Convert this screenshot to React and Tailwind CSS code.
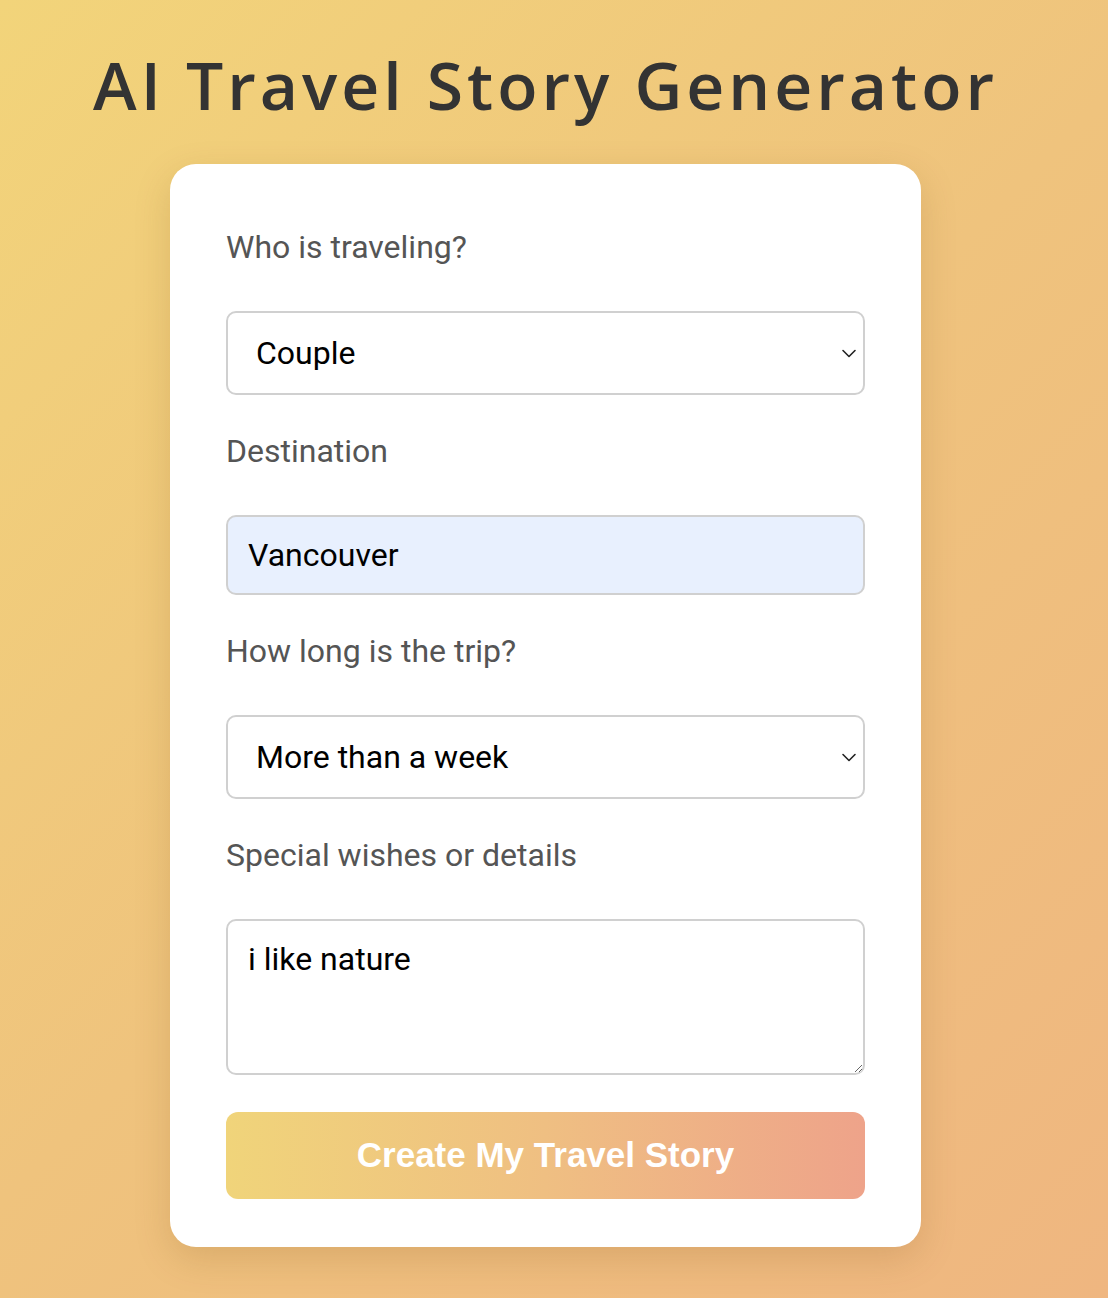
import { useState } from 'react';

function Chevron() {
  return (
    <svg
      className="pointer-events-none absolute right-[8px] top-1/2 -translate-y-1/2"
      width="16"
      height="10"
      viewBox="0 0 16 10"
      fill="none"
    >
      <path d="M2 2.5l6 6 6-6" stroke="#222" strokeWidth="1.6" strokeLinecap="round" strokeLinejoin="round" />
    </svg>
  );
}

function Label({ children, htmlFor }) {
  return (
    <label
      htmlFor={htmlFor}
      className="block h-[36px] leading-[36px] text-[32px] text-[#555] font-['Roboto',sans-serif] mb-[46px]"
    >
      {children}
    </label>
  );
}

export default function App() {
  const [who, setWho] = useState('Couple');
  const [dest, setDest] = useState('Vancouver');
  const [length, setLength] = useState('More than a week');
  const [wishes, setWishes] = useState('i like nature');

  return (
    <div className="min-h-[1298px] w-full bg-[linear-gradient(135deg,#f2d47a_0%,#efc37d_50%,#efb680_100%)]">
      <div className="w-[1091px] flex flex-col items-center pt-[44px]">
        {/* Title */}
        <h1 className="text-[66px] leading-[80px] font-semibold tracking-[4px] text-[#333] font-['Open_Sans',sans-serif]">
          AI Travel Story Generator
        </h1>

        {/* Form card */}
        <div className="mt-[40px] w-[751px] bg-white rounded-[26px] shadow-[0_12px_36px_rgba(120,80,20,0.18)] px-[56px] pt-[65px] pb-[48px]">
          <Label htmlFor="who">Who is traveling?</Label>
          <div className="relative mb-[38px]">
            <select
              id="who"
              value={who}
              onChange={(e) => setWho(e.target.value)}
              className="appearance-none w-full h-[84px] rounded-[10px] border-2 border-[#d0d0d0] bg-white pl-[28px] text-[32px] text-black font-['Roboto',sans-serif] outline-none"
            >
              <option>Solo</option>
              <option>Couple</option>
              <option>Family</option>
              <option>Friends</option>
            </select>
            <Chevron />
          </div>

          <Label htmlFor="dest">Destination</Label>
          <input
            id="dest"
            value={dest}
            onChange={(e) => setDest(e.target.value)}
            className="block w-full h-[80px] mb-[38px] rounded-[10px] border-2 border-[#d0d0d0] bg-[#e8f0fe] px-[20px] text-[32px] text-black font-['Roboto',sans-serif] outline-none"
          />

          <Label htmlFor="len">How long is the trip?</Label>
          <div className="relative mb-[38px]">
            <select
              id="len"
              value={length}
              onChange={(e) => setLength(e.target.value)}
              className="appearance-none w-full h-[84px] rounded-[10px] border-2 border-[#d0d0d0] bg-white pl-[28px] text-[32px] text-black font-['Roboto',sans-serif] outline-none"
            >
              <option>A weekend</option>
              <option>A few days</option>
              <option>A week</option>
              <option>More than a week</option>
            </select>
            <Chevron />
          </div>

          <Label htmlFor="wishes">Special wishes or details</Label>
          <textarea
            id="wishes"
            value={wishes}
            onChange={(e) => setWishes(e.target.value)}
            className="block w-full h-[156px] mb-[37px] rounded-[10px] border-2 border-[#d0d0d0] bg-white px-[20px] pt-[18px] text-[32px] leading-[40px] text-black font-['Roboto',sans-serif] outline-none"
          />

          <button className="w-full h-[87px] rounded-[12px] bg-[linear-gradient(90deg,#f0d47a_0%,#efbf82_50%,#eea38a_100%)] text-white text-[35px] font-bold font-['Liberation_Sans',Arial,sans-serif]">
            Create My Travel Story
          </button>
        </div>
      </div>
    </div>
  );
}
